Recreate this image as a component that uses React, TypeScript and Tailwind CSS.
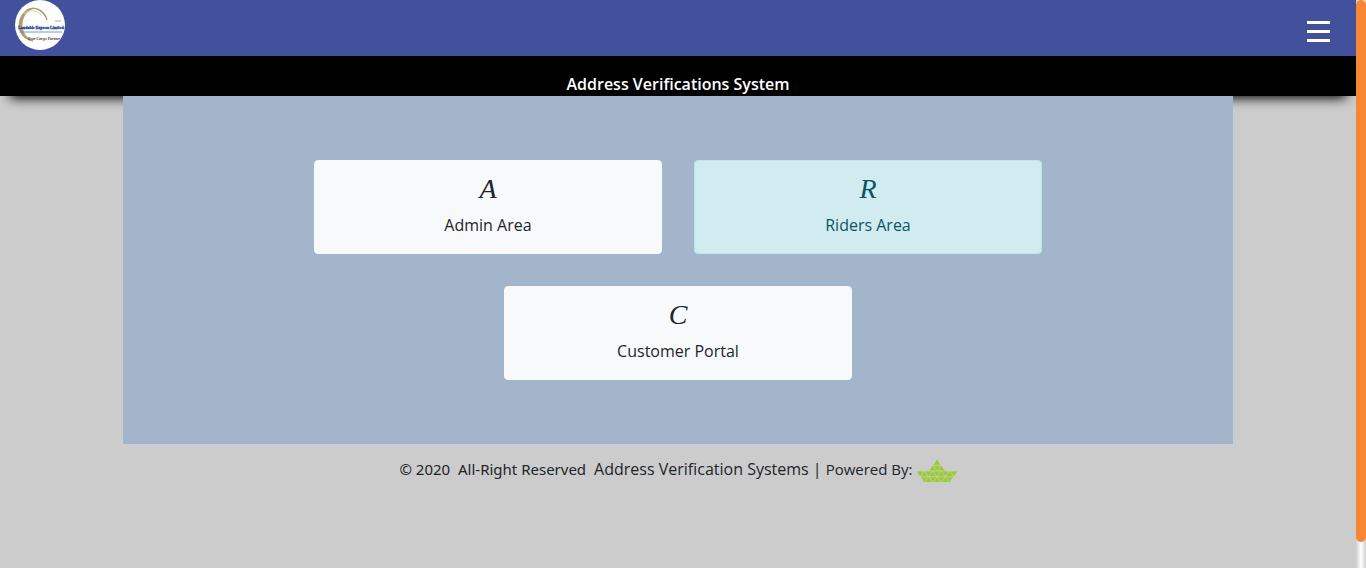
import React from "react";

type Area = { initial: string; label: string; tone: string };

const areas: Area[] = [
  { initial: "A", label: "Admin Area", tone: "bg-[#f8f9fa] border-[#f8f9fa] text-[#212529]" },
  { initial: "R", label: "Riders Area", tone: "bg-[#d1ecf1] border-[#bee5eb] text-[#0c5460]" },
  { initial: "C", label: "Customer Portal", tone: "bg-[#f8f9fa] border-[#f8f9fa] text-[#212529]" },
];

function BrandLogo() {
  return (
    <svg viewBox="0 0 50 50" className="block size-[50px]" role="img" aria-label="Landable Express Limited">
      <circle cx="25" cy="25" r="25" fill="#fefefe" />
      <path d="M19 8C11 8 4 16 4 25c0 9 6 15 14 16C11 38 7 32 7 25c0-8 5-15 12-17Z" fill="#b39a6c" stroke="#b39a6c" strokeWidth="0.8" />
      <path d="M12 10c8-4 17 0 20 10" fill="none" stroke="#b39a6c" strokeWidth="1.4" />
      <path d="M9 14c6-5 13-4 17 1" fill="none" stroke="#ddcfb4" strokeWidth="0.9" />
      <path d="M40 21h6" stroke="#8d94a8" strokeWidth="0.8" />
      <text x="26" y="29" textAnchor="middle" fontSize="4" fontWeight="700" fill="#24488e" stroke="#24488e" strokeWidth="0.3" fontFamily="Liberation Serif, serif">
        Landable Express Limited
      </text>
      <path d="M5 32h42" stroke="#5d7fc0" strokeWidth="0.8" />
      <text x="29" y="40" textAnchor="middle" fontSize="4" fontStyle="italic" fontWeight="700" fill="#3c3835" fontFamily="Liberation Serif, serif">
        Your Cargo Partner
      </text>
    </svg>
  );
}

function up(x: number, y: number) {
  return `M${x} ${y}l3 5h-6z`;
}
function down(x: number, y: number) {
  return `M${x - 3} ${y}h6l-3 5z`;
}

const boat = [
  up(20, 0),
  up(16, 6), down(20, 6), up(24, 6),
  down(4, 12), up(8, 12), down(12, 12), up(16, 12), down(20, 12), up(24, 12), down(28, 12), up(32, 12), down(36, 12),
  down(8, 18), up(12, 18), down(16, 18), up(20, 18), down(24, 18), up(28, 18), down(32, 18),
].join("");

function BoatLogo() {
  return (
    <svg viewBox="1 0 38 23" preserveAspectRatio="none" className="block h-[22px] w-10" role="img" aria-label="Developer home">
      <path d={boat} fill="#9acd32" stroke="#9acd32" strokeWidth="0.3" />
    </svg>
  );
}

export default function App() {
  return (
    <div className="flex min-h-screen bg-[#cccccc] font-['Open_Sans',sans-serif] text-base text-[#212529]">
      <div className="min-w-0 flex-1">
        <header className="flex h-14 items-start justify-between bg-[#43519d] pr-6 pl-[15px]">
          <a href="#home"><BrandLogo /></a>
          <button type="button" aria-label="Open menu" className="mt-5 flex h-6 w-7 flex-col items-center gap-1.5 pt-px text-white">
            <span className="h-[3px] w-[23px] bg-white" />
            <span className="h-[3px] w-[23px] bg-white" />
            <span className="h-[3px] w-[23px] bg-white" />
          </button>
        </header>
        <h1 className="bg-black pt-4 text-center font-semibold text-white shadow-[0_12px_12px_-10px_#000]">
          Address Verifications System
        </h1>
        <main className="relative mx-auto flex max-w-[1110px] flex-wrap justify-center gap-8 bg-[#a2b5cb] px-44 py-16">
          {areas.map((a) => (
            <a
              key={a.label}
              href={`#${a.initial}`}
              className={`flex h-[94px] w-[348px] flex-col items-center rounded border pt-2 ${a.tone}`}
            >
              <span className="font-['Liberation_Serif',serif] text-[28px] leading-10 italic">{a.initial}</span>
              <span className="leading-8">{a.label}</span>
            </a>
          ))}
        </main>
        <footer className="flex items-start justify-center gap-1 pt-[13px]">
          <p className="flex items-baseline gap-2 whitespace-pre">
            <span className="font-['Noto_Sans',sans-serif] text-[15px]">© 2020  All-Right Reserved</span>
            <span>Address Verification Systems |</span>
          </p>
          <p className="text-[15px] leading-6">Powered By:</p>
          <a href="#developer" className="pt-[3px]"><BoatLogo /></a>
        </footer>
      </div>
      <div className="flex h-screen w-2.5 flex-col bg-[linear-gradient(to_right,#d0d0d0,#ffffff,#d0d0d0)]" aria-hidden="true">
        <div className="h-[542px] rounded-full bg-[#f78733]" />
      </div>
    </div>
  );
}
